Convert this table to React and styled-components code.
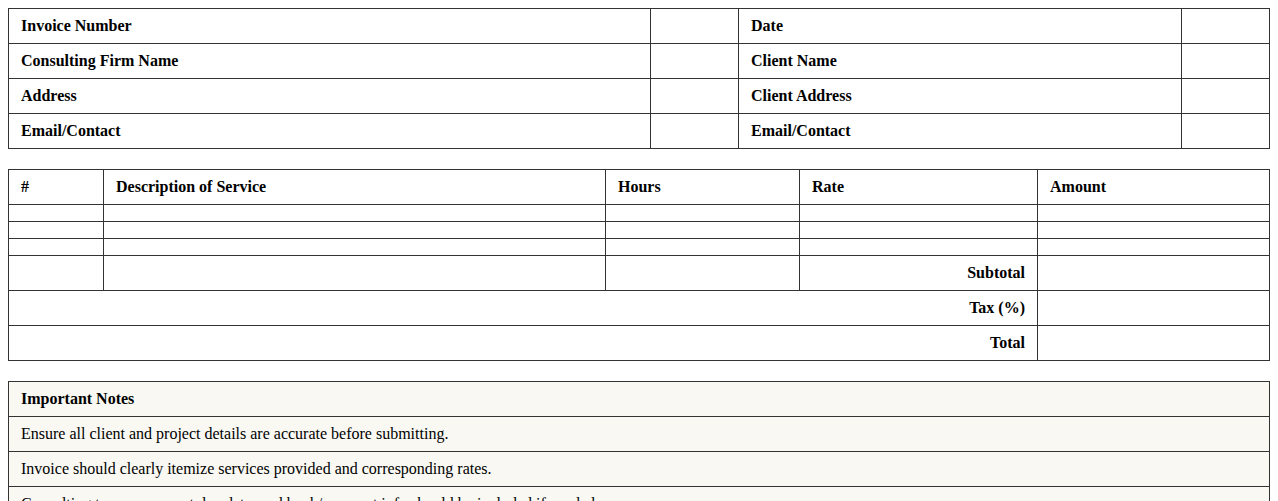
import React from 'react';
import styled, { createGlobalStyle } from 'styled-components';

const GlobalStyle = createGlobalStyle`
  body {
    margin: 8px;
    font-family: "Liberation Serif", "Times New Roman", serif;
    font-size: 16px;
    color: #000;
    background: #fff;
  }
`;

const Table = styled.table`
  width: 100%;
  border-collapse: collapse;
  table-layout: fixed;
  margin-bottom: 20px;
  background: ${(props) => (props.shaded ? '#f9f8f3' : '#ffffff')};
`;

const Col = styled.col`
  width: ${(props) => (props.w ? `${props.w}px` : 'auto')};
`;

const Cell = styled.td`
  border: 1px solid #333;
  padding: 8px 12px;
  line-height: 18px;
  font-weight: ${(props) => (props.bold ? 'bold' : 'normal')};
  text-align: ${(props) => (props.right ? 'right' : 'left')};
`;

const HeadCell = styled.th`
  border: 1px solid #333;
  padding: 8px 12px;
  line-height: 18px;
  font-weight: bold;
  text-align: left;
`;

const infoRows = [
  ['Invoice Number', 'Date'],
  ['Consulting Firm Name', 'Client Name'],
  ['Address', 'Client Address'],
  ['Email/Contact', 'Email/Contact'],
];

const notes = [
  'Ensure all client and project details are accurate before submitting.',
  'Invoice should clearly itemize services provided and corresponding rates.',
  'Consulting terms, payment due date, and bank/payment info should be included if needed.',
];

const App = () => {
  return (
    <>
      <GlobalStyle />
      <Table>
        <colgroup>
          <Col w={642} />
          <Col w={88} />
          <Col w={443} />
          <Col />
        </colgroup>
        <tbody>
          {infoRows.map(([left, right], i) => (
            <tr key={i}>
              <Cell bold>{left}</Cell>
              <Cell />
              <Cell bold>{right}</Cell>
              <Cell />
            </tr>
          ))}
        </tbody>
      </Table>

      <Table>
        <colgroup>
          <Col w={95} />
          <Col w={502} />
          <Col w={194} />
          <Col w={238} />
          <Col />
        </colgroup>
        <thead>
          <tr>
            <HeadCell>#</HeadCell>
            <HeadCell>Description of Service</HeadCell>
            <HeadCell>Hours</HeadCell>
            <HeadCell>Rate</HeadCell>
            <HeadCell>Amount</HeadCell>
          </tr>
        </thead>
        <tbody>
          {[0, 1, 2].map((i) => (
            <tr key={i}>
              <Cell />
              <Cell />
              <Cell />
              <Cell />
              <Cell />
            </tr>
          ))}
          <tr>
            <Cell />
            <Cell />
            <Cell />
            <Cell bold right>Subtotal</Cell>
            <Cell />
          </tr>
          <tr>
            <Cell colSpan={4} bold right>Tax (%)</Cell>
            <Cell />
          </tr>
          <tr>
            <Cell colSpan={4} bold right>Total</Cell>
            <Cell />
          </tr>
        </tbody>
      </Table>

      <Table shaded>
        <thead>
          <tr>
            <HeadCell>Important Notes</HeadCell>
          </tr>
        </thead>
        <tbody>
          {notes.map((note, i) => (
            <tr key={i}>
              <Cell>{note}</Cell>
            </tr>
          ))}
        </tbody>
      </Table>
    </>
  );
};

export default App;
